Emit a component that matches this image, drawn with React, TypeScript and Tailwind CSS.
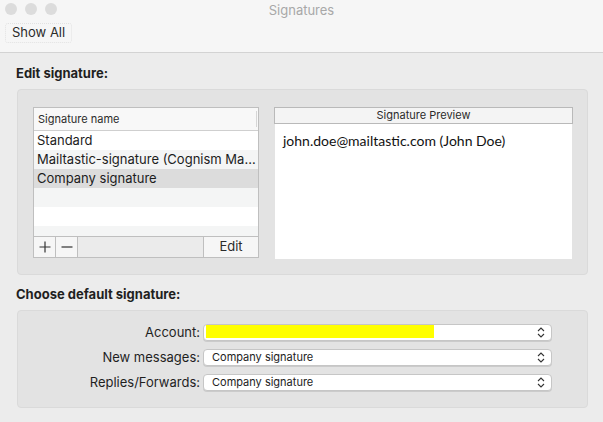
import React from "react";

const sysFont = { fontFamily: 'Inter, "Noto Sans", sans-serif' };

function UpDown() {
  return (
    <svg width="8" height="11" viewBox="0 0 8 11" fill="none" stroke="#333" strokeWidth="1.1">
      <path d="M1 4 L4 1 L7 4" />
      <path d="M1 7 L4 10 L7 7" />
    </svg>
  );
}

function Select({ value, redacted }: { value?: string; redacted?: boolean }) {
  return (
    <div className="relative flex h-[17px] w-[349px] items-center rounded-[4px] border border-[#c6c6c6] bg-white pl-[8px] pr-[6px] shadow-[0_1px_0_rgba(0,0,0,0.1)]">
      {redacted ? (
        <div className="absolute left-[2px] top-0 h-[13px] w-[228px] bg-[#ffff00]" />
      ) : (
        <span className="text-[11px] leading-none text-[#222]">{value}</span>
      )}
      <div className="ml-auto">
        <UpDown />
      </div>
    </div>
  );
}

export default function App() {
  const rows = [
    { name: "Standard", bg: "bg-white" },
    { name: "Mailtastic-signature (Cognism Ma...", bg: "bg-[#f4f5f5]" },
    { name: "Company signature", bg: "bg-[#dcdcdc]" },
    { name: "", bg: "bg-[#f4f5f5]" },
    { name: "", bg: "bg-white" },
    { name: "", bg: "bg-[#f4f5f5]" },
  ];

  return (
    <div className="flex h-[422px] w-[603px] flex-col overflow-hidden bg-[#ececec] text-[#222]" style={sysFont}>
      {/* title bar + toolbar */}
      <div className="relative h-[53px] border-b border-[#d3d3d3] bg-[#f6f6f6]">
        <div className="flex gap-[8px] pl-[5px] pt-[3px]">
          <span className="h-[12px] w-[12px] rounded-full bg-[#dcdcdc]" />
          <span className="h-[12px] w-[12px] rounded-full bg-[#dcdcdc]" />
          <span className="h-[12px] w-[12px] rounded-full bg-[#dcdcdc]" />
        </div>
        <div className="absolute left-0 right-0 top-[1px] text-center text-[13px] text-[#a8a8a8]">Signatures</div>
        <div className="ml-[5px] mt-[8px] inline-flex h-[20px] items-center rounded-[3px] border border-dotted border-[#e2e2e2] px-[6px] text-[13px] text-[#2b2b2b]">
          Show All
        </div>
      </div>

      {/* edit signature */}
      <div className="pl-[16px] pt-[11px] text-[13px] font-bold leading-[18px] text-[#1f1f1f]">Edit signature:</div>
      <div className="ml-[17px] mt-[7px] flex h-[186px] w-[571px] gap-[15px] rounded-[4px] border border-[#dadada] bg-[#e3e3e3] pl-[15px] pt-[17px]">
        {/* list */}
        <div className="flex h-[151px] w-[226px] flex-col border border-[#bfbfbf] bg-white">
          <div className="flex h-[23px] items-center border-b border-[#cfcfcf] bg-[#f8f8f8]">
            <span className="flex-1 pl-[4px] text-[11px] text-[#2b2b2b]">Signature name</span>
            <span className="mr-[1px] h-[16px] w-px bg-[#d6d6d6]" />
          </div>
          <div className="flex-1 overflow-hidden">
            {rows.map((r, i) => (
              <div key={i} className={`flex h-[19px] items-center pl-[3px] text-[13px] text-[#1d1d1d] ${r.bg}`}>
                {r.name}
              </div>
            ))}
          </div>
          <div className="flex h-[21px] border-t border-[#bfbfbf] bg-[#ebebeb]">
            <div className="flex w-[22px] items-center justify-center border-r border-[#bfbfbf] bg-[#f6f6f6]">
              <svg width="12" height="12" viewBox="0 0 12 12" stroke="#333" strokeWidth="1.2">
                <path d="M6 0.5 V11.5 M0.5 6 H11.5" />
              </svg>
            </div>
            <div className="flex w-[22px] items-center justify-center border-r border-[#bfbfbf] bg-[#f6f6f6]">
              <svg width="12" height="12" viewBox="0 0 12 12" stroke="#333" strokeWidth="1.2">
                <path d="M0.5 6 H11.5" />
              </svg>
            </div>
            <div className="flex-1" />
            <div className="flex w-[55px] items-center justify-center border-l border-[#bfbfbf] bg-[#f6f6f6] text-[13px] text-[#2b2b2b]">
              Edit
            </div>
          </div>
        </div>

        {/* preview */}
        <div className="flex h-[152px] w-[299px] flex-col">
          <div className="flex h-[17px] items-center justify-center border border-[#b9b9b9] bg-[#f4f4f4] text-[11px] text-[#2b2b2b]">
            Signature Preview
          </div>
          <div className="mx-[1px] flex-1 bg-white pl-[8px] pt-[4px]">
            <span className="text-[14px] text-[#111]" style={{ fontFamily: 'Lato, "Open Sans", sans-serif' }}>
              john.doe@mailtastic.com (John Doe)
            </span>
          </div>
        </div>
      </div>

      {/* choose default */}
      <div className="pl-[16px] pt-[10px] text-[13px] font-bold leading-[18px] text-[#1f1f1f]">Choose default signature:</div>
      <div className="ml-[17px] mt-[7px] flex h-[98px] w-[571px] flex-col gap-[8px] rounded-[4px] border border-[#dadada] bg-[#e3e3e3] pt-[13px]">
        {[
          { label: "Account:", redacted: true },
          { label: "New messages:", value: "Company signature" },
          { label: "Replies/Forwards:", value: "Company signature" },
        ].map((f) => (
          <div key={f.label} className="flex h-[17px] items-center">
            <span className="w-[182px] text-right text-[13px] leading-[17px] text-[#1f1f1f]">{f.label}</span>
            <div className="ml-[3px]">
              <Select value={f.value} redacted={f.redacted} />
            </div>
          </div>
        ))}
      </div>
    </div>
  );
}
